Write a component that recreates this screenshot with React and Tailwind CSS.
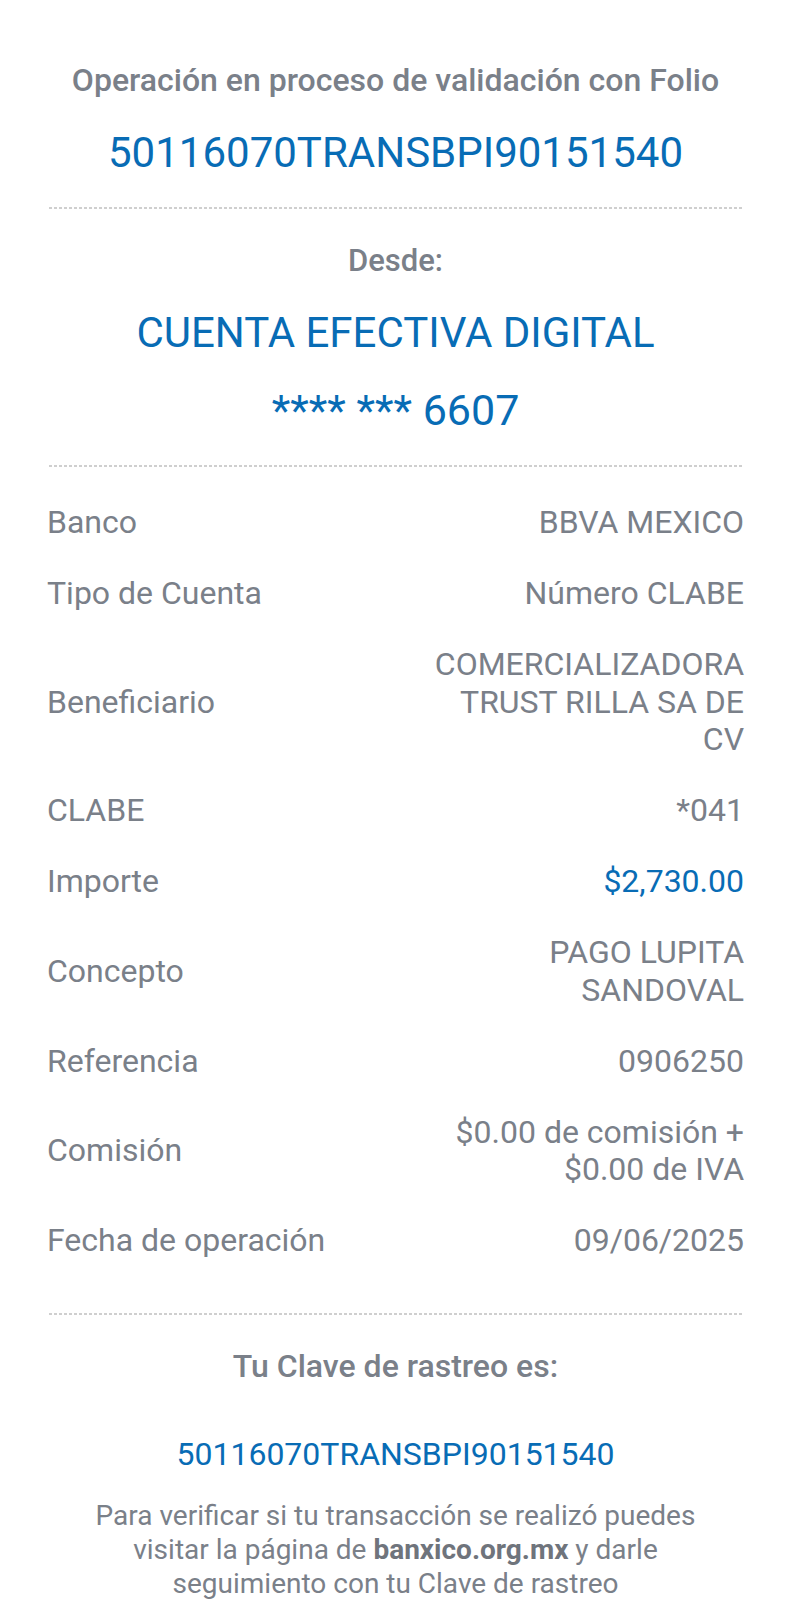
import React from 'react';

const rows = [
  { label: 'Banco', value: ['BBVA MEXICO'] },
  { label: 'Tipo de Cuenta', value: ['Número CLABE'] },
  { label: 'Beneficiario', value: ['COMERCIALIZADORA', 'TRUST RILLA SA DE', 'CV'] },
  { label: 'CLABE', value: ['*041'] },
  { label: 'Importe', value: ['$2,730.00'], blue: true },
  { label: 'Concepto', value: ['PAGO LUPITA', 'SANDOVAL'] },
  { label: 'Referencia', value: ['0906250'] },
  { label: 'Comisión', value: ['$0.00 de comisión +', '$0.00 de IVA'] },
  { label: 'Fecha de operación', value: ['09/06/2025'] },
];

function Dashed() {
  return <div className="mx-[2px] h-[2px] bg-[repeating-linear-gradient(90deg,#cfcfcf_0_3px,transparent_3px_5px)]" />;
}

export default function App() {
  return (
    <div className="min-h-[1600px] bg-white px-[47px] pt-[60px] font-['Roboto','Liberation_Sans',sans-serif] text-[#7a8089]">
      <p className="text-center text-[32px] leading-[40px] font-medium">Operación en proceso de validación con Folio</p>
      <p className="mt-[29px] text-center text-[42px] leading-[48px] text-[#086cb5]">50116070TRANSBPI90151540</p>

      <div className="mt-[30px]"><Dashed /></div>

      <p className="mt-[32px] text-center text-[31px] leading-[40px] font-medium">Desde:</p>
      <p className="mt-[28px] text-center text-[42px] leading-[48px] text-[#086cb5]">CUENTA EFECTIVA DIGITAL</p>
      <p className="mt-[29px] text-center text-[43px] leading-[48px] text-[#086cb5]">**** *** 6607</p>

      <div className="mt-[31px]"><Dashed /></div>

      <div className="mt-[37px] flex flex-col gap-[33.5px]">
        {rows.map((r) => (
          <div key={r.label} className="flex items-center justify-between text-[32px] leading-[37.5px]">
            <span>{r.label}</span>
            <span className={`text-right ${r.blue ? 'text-[#086cb5]' : ''}`}>
              {r.value.map((v, i) => (
                <React.Fragment key={i}>
                  {i > 0 && <br />}
                  {v}
                </React.Fragment>
              ))}
            </span>
          </div>
        ))}
      </div>

      <div className="mt-[53px]"><Dashed /></div>

      <p className="mt-[31px] text-center text-[32px] leading-[40px] font-medium">Tu Clave de rastreo es:</p>
      <p className="mt-[48px] text-center text-[32px] leading-[40px] text-[#086cb5]">50116070TRANSBPI90151540</p>
      <p className="mt-[25px] text-center text-[28px] leading-[34px]">
        Para verificar si tu transacción se realizó puedes
        <br />
        visitar la página de <span className="font-bold text-[#6f747c]">banxico.org.mx</span> y darle
        <br />
        seguimiento con tu Clave de rastreo
      </p>
    </div>
  );
}
